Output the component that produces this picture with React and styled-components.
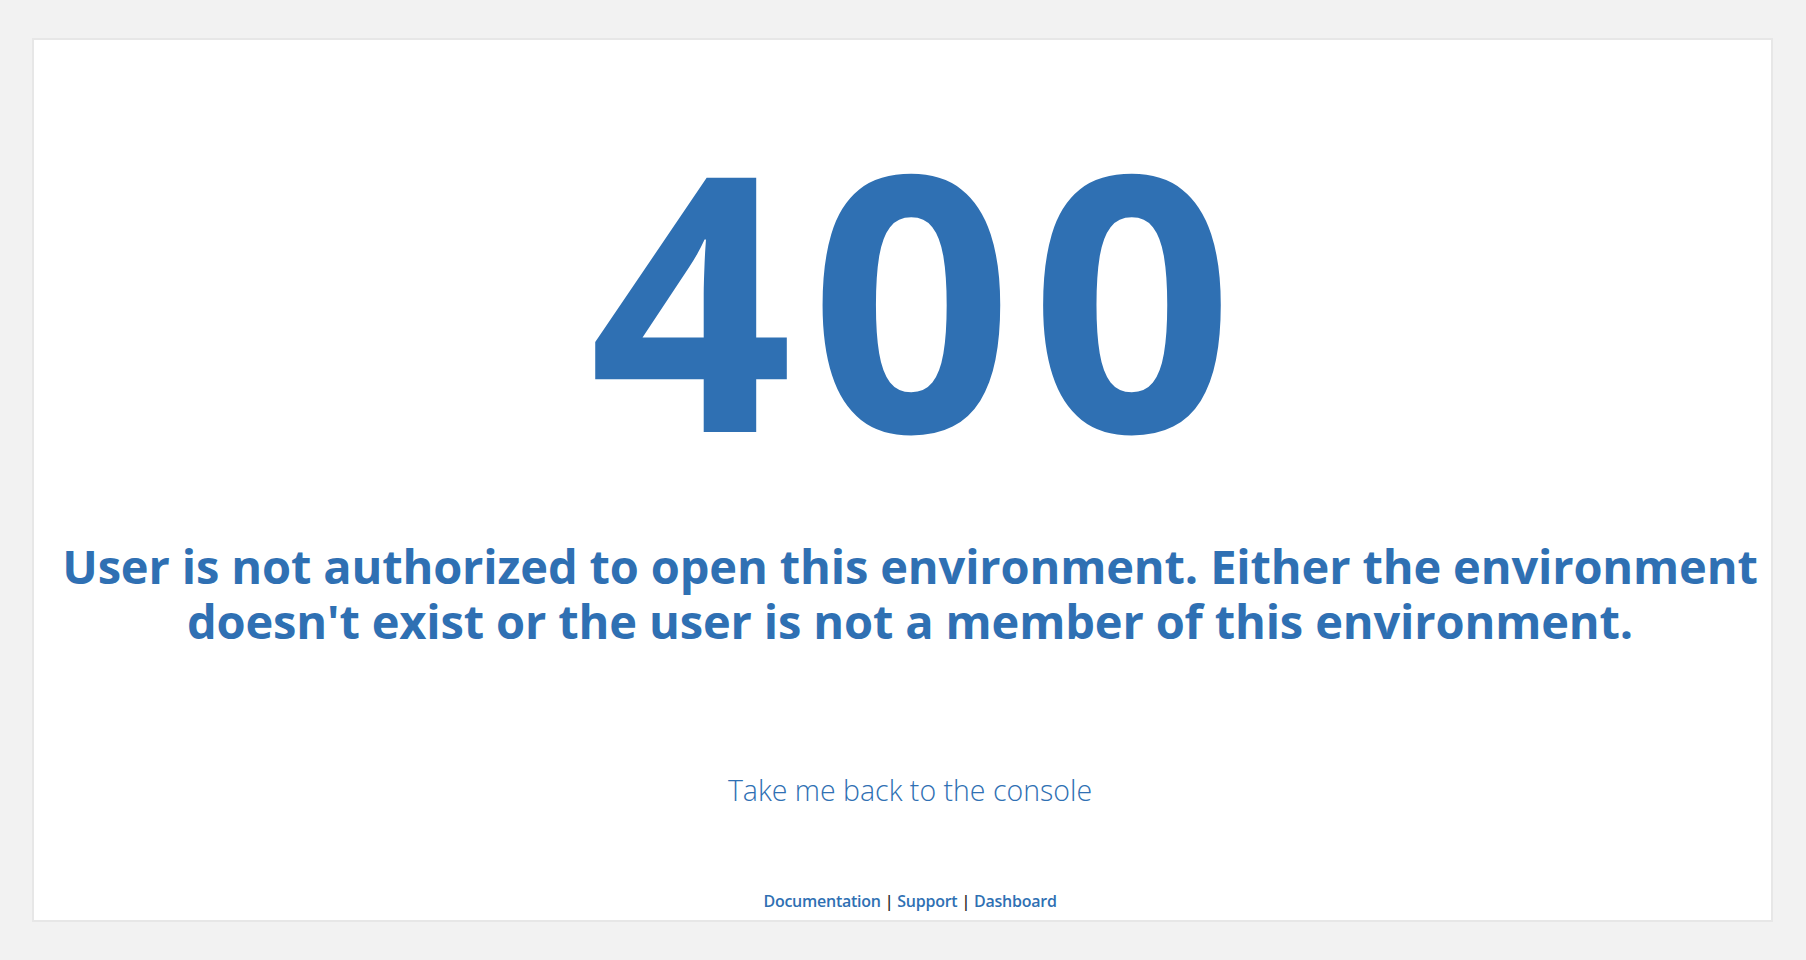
import React from "react";
import styled, { createGlobalStyle } from "styled-components";

const GlobalStyle = createGlobalStyle`
  html, body {
    margin: 0;
    padding: 0;
    background: #f2f2f2;
  }
  body {
    font-family: "Open Sans", "Noto Sans", sans-serif;
  }
  * { box-sizing: border-box; }
`;

const Page = styled.div`
  padding: 38px 33px 38px 32px;
  min-height: 100vh;
`;

const Card = styled.main`
  background: #ffffff;
  border: 2px solid #e7e7e7;
  display: flex;
  flex-direction: column;
  align-items: center;
  padding: 76px 0 7px 15px;
  text-align: center;
  color: #2f70b3;
`;

const Code = styled.h1`
  margin: 0;
  font-family: "Open Sans", sans-serif;
  font-weight: 700;
  font-size: 356px;
  line-height: 356px;
  letter-spacing: 17px;
  padding-left: 20px;
`;

const Message = styled.h2`
  margin: 67px 0 0;
  width: 1712px;
  font-family: "Open Sans", sans-serif;
  font-weight: 700;
  font-size: 47px;
  letter-spacing: -0.15px;
  line-height: 55px;
`;

const BackLink = styled.a`
  margin-top: 124px;
  font-family: "Open Sans", sans-serif;
  font-weight: 300;
  font-size: 28.5px;
  line-height: 34px;
  color: #2f70b3;
  text-decoration: none;
`;

const Footer = styled.nav`
  margin-top: 82px;
  font-family: "Open Sans", sans-serif;
  font-size: 16px;
  letter-spacing: -0.25px;
  line-height: 24px;
  font-weight: 600;
  color: #2b2b2b;
  display: flex;
  gap: 4px;
`;

const FooterLink = styled.a`
  color: #2f70b3;
  text-decoration: none;
`;

export default function App() {
  return (
    <>
      <GlobalStyle />
      <Page>
        <Card>
          <Code>400</Code>
          <Message>
            User is not authorized to open this environment. Either the environment doesn't exist or the user is not a member of this environment.
          </Message>
          <BackLink href="#">Take me back to the console</BackLink>
          <Footer>
            <FooterLink href="#">Documentation</FooterLink>
            <span>|</span>
            <FooterLink href="#">Support</FooterLink>
            <span>|</span>
            <FooterLink href="#">Dashboard</FooterLink>
          </Footer>
        </Card>
      </Page>
    </>
  );
}
